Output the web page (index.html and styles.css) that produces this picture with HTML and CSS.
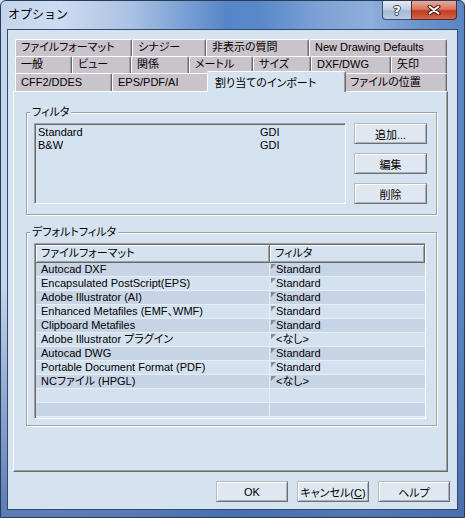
FILE: index.html
```html
<!DOCTYPE html>
<html lang="ja">
<head>
<meta charset="utf-8">
<title>オプション</title>
<link rel="stylesheet" href="styles.css">
</head>
<body>
<div class="window">
  <div class="titlebar">
    <span class="title">オプション</span>
    <div class="caption">
      <span class="cbtn help">?</span>
      <span class="cbtn close">
        <svg width="14" height="10" viewBox="0 0 14 10">
          <path d="M2.5 1.5 L11.5 8.5 M11.5 1.5 L2.5 8.5" stroke="#3a1510" stroke-width="4" stroke-linecap="round"/>
          <path d="M2.5 1.5 L11.5 8.5 M11.5 1.5 L2.5 8.5" stroke="#ffffff" stroke-width="2" stroke-linecap="round"/>
        </svg>
      </span>
    </div>
  </div>
  <div class="client">
    <div class="tabctl">
      <div class="tabrow r1">
        <div class="tab">ファイルフォーマット</div>
        <div class="tab">シナジー</div>
        <div class="tab">非表示の質問</div>
        <div class="tab">New Drawing Defaults</div>
      </div>
      <div class="tabrow r2">
        <div class="tab">一般</div>
        <div class="tab">ビュー</div>
        <div class="tab">関係</div>
        <div class="tab">メートル</div>
        <div class="tab">サイズ</div>
        <div class="tab">DXF/DWG</div>
        <div class="tab">矢印</div>
      </div>
      <div class="tabrow r3">
        <div class="tab">CFF2/DDES</div>
        <div class="tab">EPS/PDF/AI</div>
        <div class="tab selected">割り当てのインポート</div>
        <div class="tab">ファイルの位置</div>
      </div>
      <div class="pane">
        <fieldset class="group g1">
          <legend>フィルタ</legend>
          <div class="g1body">
            <div class="listbox">
              <div class="lbrow"><span class="lbname">Standard</span><span>GDI</span></div>
              <div class="lbrow"><span class="lbname">B&amp;W</span><span>GDI</span></div>
            </div>
            <div class="sidebtns">
              <button class="btn">追加...</button>
              <button class="btn">編集</button>
              <button class="btn">削除</button>
            </div>
          </div>
        </fieldset>
        <fieldset class="group g2">
          <legend>デフォルトフィルタ</legend>
          <div class="listview">
            <div class="lvhead">
              <div class="hcell c1">ファイルフォーマット</div>
              <div class="hcell c2">フィルタ</div>
            </div>
            <div class="lvrow"><div class="cell c1">Autocad DXF</div><div class="cell c2"><i class="tri"></i>Standard</div></div>
            <div class="lvrow"><div class="cell c1">Encapsulated PostScript(EPS)</div><div class="cell c2"><i class="tri"></i>Standard</div></div>
            <div class="lvrow"><div class="cell c1">Adobe Illustrator (AI)</div><div class="cell c2"><i class="tri"></i>Standard</div></div>
            <div class="lvrow"><div class="cell c1">Enhanced Metafiles (EMF、WMF)</div><div class="cell c2"><i class="tri"></i>Standard</div></div>
            <div class="lvrow"><div class="cell c1">Clipboard Metafiles</div><div class="cell c2"><i class="tri"></i>Standard</div></div>
            <div class="lvrow"><div class="cell c1">Adobe Illustrator プラグイン</div><div class="cell c2"><i class="tri"></i>&lt;なし&gt;</div></div>
            <div class="lvrow"><div class="cell c1">Autocad DWG</div><div class="cell c2"><i class="tri"></i>Standard</div></div>
            <div class="lvrow"><div class="cell c1">Portable Document Format (PDF)</div><div class="cell c2"><i class="tri"></i>Standard</div></div>
            <div class="lvrow"><div class="cell c1">NCファイル (HPGL)</div><div class="cell c2"><i class="tri"></i>&lt;なし&gt;</div></div>
            <div class="lvrow"><div class="cell c1"></div><div class="cell c2"></div></div>
            <div class="lvrow"><div class="cell c1"></div><div class="cell c2"></div></div>
          </div>
        </fieldset>
      </div>
    </div>
    <div class="footer">
      <button class="btn">OK</button>
      <button class="btn">キャンセル(<u>C</u>)</button>
      <button class="btn">ヘルプ</button>
    </div>
  </div>
</div>
</body>
</html>
```

FILE: styles.css
```css
* { box-sizing: border-box; }

html, body {
  margin: 0;
  padding: 0;
  background: #d5e2f0;
}

body {
  width: 465px;
  height: 518px;
  font-family: "Liberation Sans", "Noto Sans CJK JP", sans-serif;
  font-size: 11px;
  font-feature-settings: "palt";
  color: #000;
}

.window {
  width: 465px;
  height: 518px;
  display: flex;
  flex-direction: column;
  border: 1px solid #2a3b55;
  border-radius: 6px 6px 0 0;
  padding: 0 6px 7px 6px;
  background:
    linear-gradient(to bottom, rgba(80,120,185,0) 0, rgba(80,120,185,0) 55%, rgba(70,108,170,0.85) 100%),
    linear-gradient(to right, #c4d5eb 0, #cddcf0 60px, #a9c1e3 130px, #5686c9 225px, #5a89ca 260px, #7fa2d5 320px, #8eaedb 370px, #6b92cb 420px, #5a85c3 465px);
}

.titlebar {
  height: 28px;
  display: flex;
  justify-content: space-between;
  align-items: flex-start;
}

.title {
  font-size: 12px;
  font-feature-settings: normal;
  line-height: 16px;
  margin: 6px 0 0 1px;
  color: #000;
}

.caption {
  display: flex;
  margin-right: 1px;
}

.cbtn {
  height: 19px;
  display: flex;
  align-items: center;
  justify-content: center;
  border: 1px solid #38506f;
  border-top: none;
}

.help {
  width: 29px;
  border-radius: 0 0 0 4px;
  border-right: none;
  background: linear-gradient(to bottom, #e2e9f3 0, #c3d1e4 45%, #a8bad3 55%, #b8cbe2 100%);
  color: #fff;
  font-weight: bold;
  font-size: 13px;
  font-family: "DejaVu Sans", sans-serif;
  text-shadow: 1px 0 0 #34455e, -1px 0 0 #34455e, 0 1px 0 #34455e, 0 -1px 0 #34455e;
}

.close {
  width: 46px;
  border-radius: 0 0 4px 0;
  border-color: #5a2a24;
  background: linear-gradient(to bottom, #e9a99b 0, #d8775f 45%, #c43b20 55%, #d2664a 100%);
}

.client {
  flex: 1;
  display: flex;
  flex-direction: column;
  border: 1px solid #2f4a70;
  background: #d5e2f0;
  padding: 9px 7px 6px 5px;
}

.tabctl {
  width: 435px;
  display: flex;
  flex-direction: column;
}

.tabrow {
  display: grid;
  margin: 0 1px 0 2px;
  height: 17px;
}

.r1 { grid-template-columns: 117px 74px 103px 1fr; }
.r2 { grid-template-columns: 57px 59px 58px 64px 58px 80px 1fr; }
.r3 { grid-template-columns: 97px 97px 135px 1fr; height: 18px; }

.tab {
  background: #c9c3cb;
  border-top: 1px solid #ffffff;
  border-left: 1px solid #ffffff;
  border-right: 1px solid #696969;
  box-shadow: inset -1px 0 0 #a0a0a0;
  border-radius: 2px 2px 0 0;
  padding: 0 0 0 5px;
  line-height: 15px;
  white-space: nowrap;
  overflow: hidden;
}

.r3 .tab { line-height: 17px; }

.tab.selected {
  position: relative;
  z-index: 2;
  background: #d5e2f0;
  margin: -2px -2px -1px -2px;
  padding-left: 7px;
  line-height: 22px;
}

.pane {
  height: 381px;
  background: #d5e2f0;
  border: 1px solid;
  border-color: #ffffff #696969 #696969 #ffffff;
  box-shadow: inset -1px -1px 0 #a0a0a0;
  padding: 14px 10px 0 12px;
  display: flex;
  flex-direction: column;
}

.group {
  margin: 0;
  min-inline-size: 0;
  border: 1px solid #a0a0a0;
  box-shadow: inset 1px 1px 0 #ffffff, 1px 1px 0 #ffffff;
}

.group legend {
  padding: 0 2px;
  margin-left: -4px;
  line-height: 13px;
  background: #d5e2f0;
}

.g1 { padding: 4px 9px 10px 7px; }

.g1body {
  display: flex;
  gap: 8px;
}

.listbox {
  width: 312px;
  height: 81px;
  border: 1px solid;
  border-color: #a0a0a0 #ffffff #ffffff #a0a0a0;
  box-shadow: inset 1px 1px 0 #696969;
  padding: 2px 0 0 3px;
}

.lbrow {
  display: flex;
  line-height: 13px;
}

.lbname { width: 222px; }

.sidebtns {
  width: 73px;
  display: flex;
  flex-direction: column;
  justify-content: space-between;
}

.btn {
  height: 21px;
  margin: 0;
  padding: 0;
  font: inherit;
  color: #000;
  background: #dfe7f1;
  border: 1px solid;
  border-color: #b9b9b9 #6f6f6f #6f6f6f #b9b9b9;
  box-shadow: inset 1px 1px 0 #ffffff, inset -1px -1px 0 #a9b2be;
}

.g2 {
  margin-top: 11px;
  padding: 4px 10px 6px 7px;
}

.listview {
  height: 176px;
  border: 1px solid;
  border-color: #a0a0a0 #ffffff #ffffff #a0a0a0;
  box-shadow: inset 1px 1px 0 #696969;
  padding: 1px 0 0 1px;
  display: flex;
  flex-direction: column;
}

.lvhead {
  display: flex;
  height: 18px;
}

.hcell {
  background: #d5e2f0;
  border-right: 1px solid #696969;
  border-bottom: 1px solid #696969;
  box-shadow: inset 1px 1px 0 #ffffff, inset -1px -1px 0 #a0a0a0;
  padding-left: 5px;
  line-height: 17px;
}

.c1 { width: 234px; }
.c2 { flex: 1; }

.lvrow {
  display: flex;
  height: 14px;
  border-bottom: 1px solid #e6edf5;
  background: #c7d4e5;
}

.lvrow:nth-child(odd) { background: #d4e1ef; }

.cell {
  line-height: 13px;
  white-space: nowrap;
}

.cell.c1 {
  padding-left: 5px;
  border-right: 1px solid #e6edf5;
}

.cell.c2 {
  display: flex;
  align-items: flex-start;
  padding-left: 1px;
}

.tri {
  width: 0;
  height: 0;
  margin: 1px 0 0 0;
  border-top: 5px solid #8a8a8a;
  border-right: 5px solid transparent;
}

.footer {
  display: flex;
  justify-content: flex-end;
  gap: 9px;
  margin-top: 9px;
}

.footer .btn {
  width: 72px;
  height: 21px;
}
```
